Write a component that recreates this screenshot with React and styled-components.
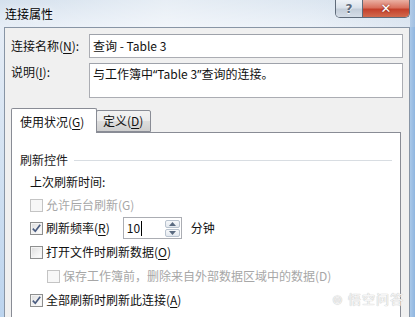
import React from 'react'
import styled, { createGlobalStyle } from 'styled-components'

const GlobalStyle = createGlobalStyle`
  html, body { margin:0; padding:0; }
  body {
    width:415px;
    height:317px;
    overflow:hidden;
    font-family:"Noto Sans CJK SC", "Noto Sans", sans-serif;
    font-size:12px;
    color:#111;
  }
  * { box-sizing:border-box; }
`

const Frame = styled.div`
  position:relative;
  width:415px;
  height:317px;
  overflow:hidden;
  display:flex;
  flex-direction:column;
  background:
    linear-gradient(to right, transparent 410px, #a9c8e9 410px, #8fb5df 415px),
    linear-gradient(#d4e0ed, #e6edf6 26px, #d3e2f2 160px, #bcd4ee 317px);
`

const TitleBar = styled.div`
  height:27px;
  flex-shrink:0;
  display:flex;
  align-items:flex-start;
  padding:0 5px 0 5px;
  background:linear-gradient(90deg, rgba(255,255,255,0) 0%, rgba(255,255,255,0.45) 40%, rgba(255,255,255,0.2) 75%, rgba(200,214,230,0.3) 100%);
`

const Title = styled.div`
  line-height:16px;
  margin-top:6px;
  font-size:12px;
  color:#000;
  text-shadow:0 0 6px rgba(255,255,255,0.9);
`

const Caption = styled.div`
  margin-left:auto;
  display:flex;
  height:18px;
  border:1px solid #5f6b7a;
  border-top:none;
  border-radius:0 0 5px 5px;
  overflow:hidden;
`

const CapBtn = styled.div`
  width:${p => p.w}px;
  height:17px;
  display:flex;
  align-items:center;
  justify-content:center;
  font-family:"DejaVu Sans", sans-serif;
  font-weight:bold;
  font-size:${p => p.close ? 13 : 12}px;
  color:${p => p.close ? '#fff' : '#5d6a7c'};
  text-shadow:${p => p.close ? '0 0 2px #6b1a10' : '0 1px 0 #fff'};
  background:${p => p.close
    ? 'linear-gradient(#eab0a3, #d9715e 45%, #c4402b 55%, #d26a4e)'
    : 'linear-gradient(#eef2f7, #d9e1ea 45%, #c3cdd9 55%, #d5dde7)'};
  & + & { border-left:1px solid #5f6b7a; }
`

const Body = styled.div`
  flex:1;
  margin:0 5px 0 4px;
  border:1px solid #8895a5;
  border-bottom:none;
  background:#f0f0f0;
  padding:6px 6px 0 6px;
  display:flex;
  flex-direction:column;
`

const FormGrid = styled.div`
  display:grid;
  grid-template-columns:78px 1fr;
  row-gap:5px;
`

const Label = styled.div`
  line-height:16px;
  padding-top:${p => p.top}px;
`

const TextBox = styled.div`
  height:${p => p.h}px;
  border:1px solid #abadb3;
  border-top-color:#9ea2aa;
  background:#fff;
  padding:${p => p.pt}px 3px 0 3px;
  line-height:16px;
`

const Quote = styled.span`
  font-family:"Noto Sans", sans-serif;
`

const U = styled.span`
  text-decoration:underline;
  text-underline-offset:2px;
`

const TabStrip = styled.div`
  margin-top:10px;
  height:24px;
  display:flex;
  align-items:flex-end;
  position:relative;
  z-index:1;
`

const Tab = styled.div`
  width:${p => p.w}px;
  height:${p => p.active ? 25 : 22}px;
  margin-bottom:${p => p.active ? -1 : 0}px;
  margin-left:${p => p.active ? 0 : -1}px;
  border:1px solid #898c95;
  border-bottom:${p => p.active ? 'none' : '1px solid #898c95'};
  border-radius:2px 2px 0 0;
  background:${p => p.active ? '#fff' : 'linear-gradient(#f2f2f2, #ebebeb 50%, #dddddd 51%, #cfcfcf)'};
  padding:${p => p.active ? '5px 0 0 8px' : '2px 0 0 6px'};
  line-height:16px;
  ${p => p.active ? 'position:relative; z-index:2;' : ''}
`

const Panel = styled.div`
  flex:1;
  margin-right:2px;
  border:1px solid #898c95;
  border-bottom:none;
  background:#fff;
  padding:19px 8px 0 8px;
  display:flex;
  flex-direction:column;
`

const GroupHead = styled.div`
  display:flex;
  align-items:center;
  height:16px;
  line-height:16px;
  color:#1a1a1a;
  &::after {
    content:'';
    flex:1;
    height:1px;
    margin:0 0 0 6px;
    background:#d8dde2;
  }
`

const Row = styled.div`
  display:flex;
  align-items:center;
  height:${p => p.h || 24}px;
  margin-top:${p => p.mt || 0}px;
  padding-left:${p => 10 + (p.indent || 0)}px;
  color:${p => p.disabled ? '#a7a7a7' : '#111'};
  line-height:16px;
  white-space:nowrap;
`

const Box = styled.span`
  width:13px;
  height:13px;
  margin-right:3px;
  flex-shrink:0;
  border:1px solid ${p => p.disabled ? '#c4c4c4' : '#8e8f8f'};
  background:${p => p.disabled
    ? '#f7f7f7'
    : 'linear-gradient(135deg, #dcdcdc, #f3f3f3 60%, #ffffff)'};
  box-shadow:inset 0 0 0 1px ${p => p.disabled ? '#f7f7f7' : '#f4f4f4'};
  display:flex;
  align-items:center;
  justify-content:center;
`

const Spin = styled.div`
  margin-left:13px;
  width:59px;
  height:22px;
  border:1px solid #abadb3;
  background:#fff;
  display:flex;
  align-items:center;
  padding-left:3px;
  padding-right:1px;
`

const SpinText = styled.span`
  flex:1;
  display:flex;
  align-items:center;
  &::after {
    content:'';
    width:1px;
    height:15px;
    margin-left:1px;
    background:#000;
  }
`

const SpinButtons = styled.div`
  display:flex;
  flex-direction:column;
  gap:1px;
`

const SpinBtn = styled.div`
  width:15px;
  height:8px;
  border:1px solid #b9c3cf;
  border-radius:2px;
  background:linear-gradient(#f6f8fa, #e3e8ee);
  display:flex;
  align-items:center;
  justify-content:center;
`

const Unit = styled.span`
  margin-left:9px;
`

const Watermark = styled.div`
  position:absolute;
  right:11px;
  bottom:9px;
  font-size:13px;
  color:#f6f6f6;
  text-shadow:0 0 1px #c4c4c4, 0 0 1px #c4c4c4;
  letter-spacing:1px;
`

function Check({ checked, disabled }) {
  return (
    <Box disabled={disabled}>
      {checked && (
        <svg width="11" height="11" viewBox="0 0 11 11">
          <path d="M1.8 5.6 L4.3 8.3 L9.2 1.8" fill="none" stroke="#4a5c80" strokeWidth="1.7" />
        </svg>
      )}
    </Box>
  )
}

function Arrow({ down }) {
  return (
    <svg width="7" height="4" viewBox="0 0 7 4">
      <path d={down ? 'M0 0 H7 L3.5 4 Z' : 'M0 4 H7 L3.5 0 Z'} fill="#5a6a80" />
    </svg>
  )
}

export default function App() {
  return (
    <Frame>
      <GlobalStyle />
      <TitleBar>
        <Title>连接属性</Title>
        <Caption>
          <CapBtn w={26}>?</CapBtn>
          <CapBtn w={47} close>✕</CapBtn>
        </Caption>
      </TitleBar>

      <Body>
        <FormGrid>
          <Label top={4}>连接名称(<U>N</U>):</Label>
          <TextBox h={24} pt={3}>查询 - Table 3</TextBox>
          <Label top={1}>说明(<U>I</U>):</Label>
          <TextBox h={35} pt={2}>与工作簿中<Quote>“</Quote>Table 3<Quote>”</Quote>查询的连接。</TextBox>
        </FormGrid>

        <TabStrip>
          <Tab w={86} active>使用状况(<U>G</U>)</Tab>
          <Tab w={55}>定义(<U>D</U>)</Tab>
        </TabStrip>

        <Panel>
          <GroupHead>刷新控件</GroupHead>
          <Row mt={2}>上次刷新时间:</Row>
          <Row h={22} disabled><Check disabled />允许后台刷新(G)</Row>
          <Row>
            <Check checked />刷新频率(<U>R</U>)
            <Spin>
              <SpinText>10</SpinText>
              <SpinButtons>
                <SpinBtn><Arrow /></SpinBtn>
                <SpinBtn><Arrow down /></SpinBtn>
              </SpinButtons>
            </Spin>
            <Unit>分钟</Unit>
          </Row>
          <Row><Check />打开文件时刷新数据(<U>O</U>)</Row>
          <Row indent={17} disabled><Check disabled />保存工作簿前，删除来自外部数据区域中的数据(D)</Row>
          <Row><Check checked />全部刷新时刷新此连接(<U>A</U>)</Row>
        </Panel>
      </Body>

      <Watermark>⊜ 悟空问答</Watermark>
    </Frame>
  )
}
